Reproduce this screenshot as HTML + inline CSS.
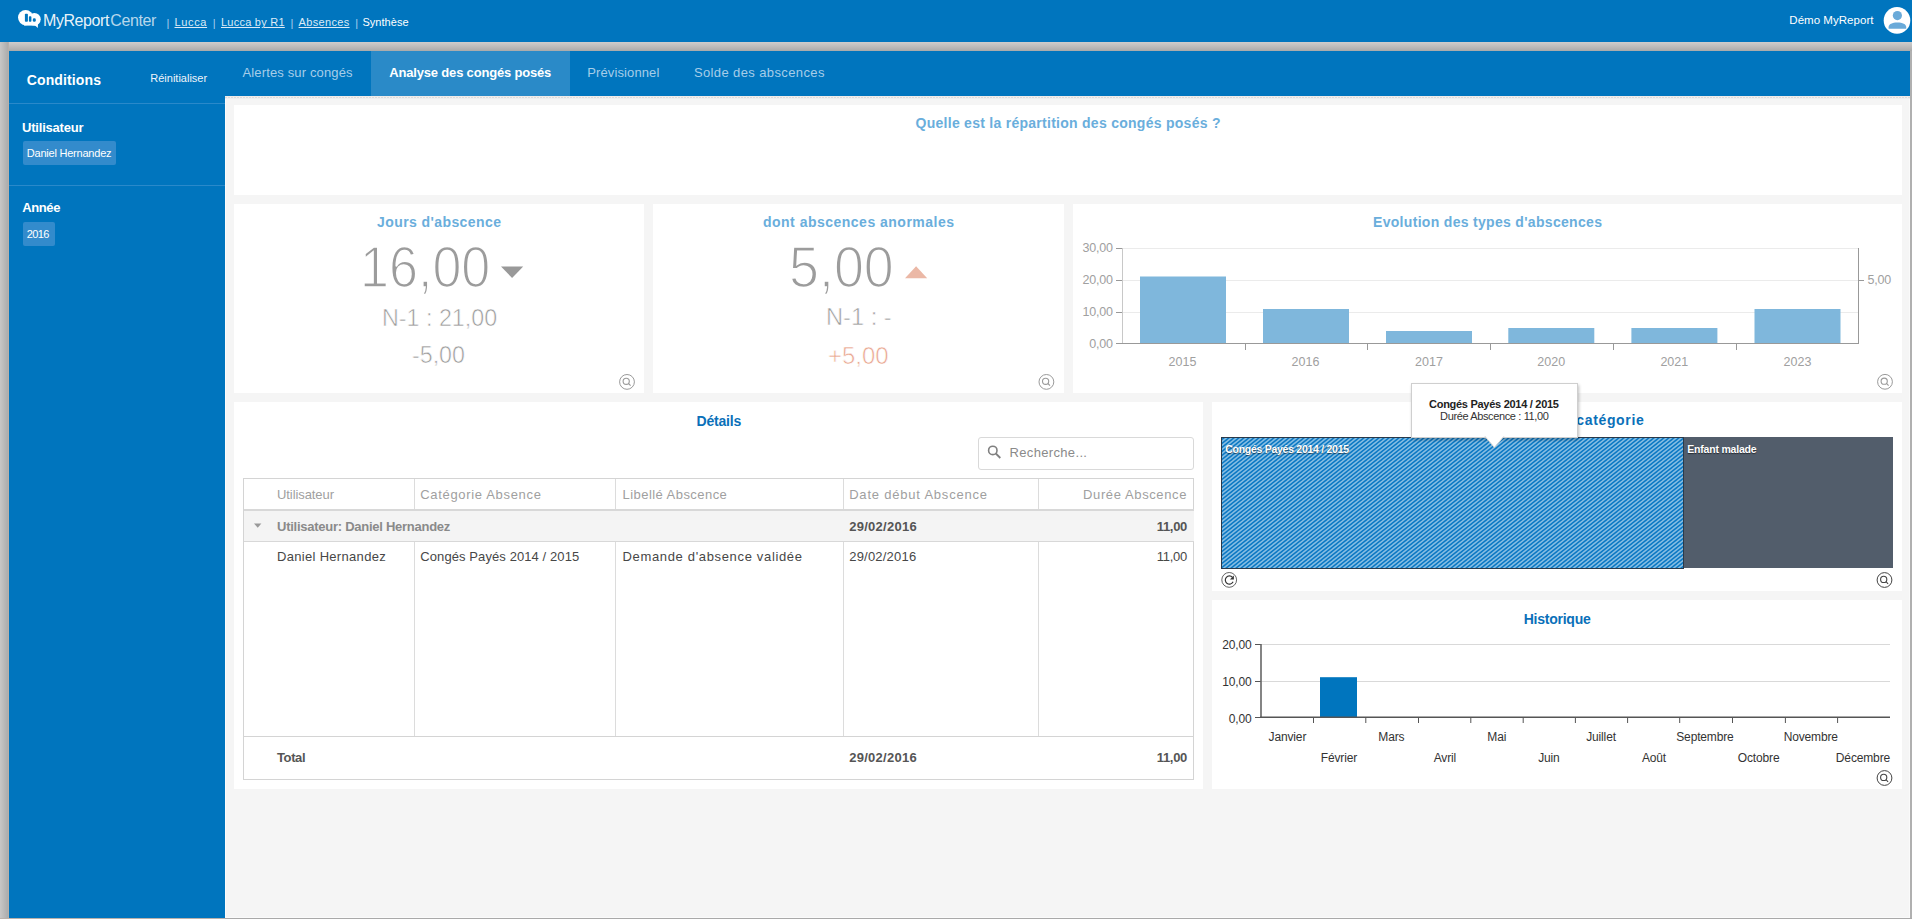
<!DOCTYPE html>
<html><head><meta charset="utf-8">
<style>
html,body{margin:0;padding:0;}
body{width:1912px;height:919px;position:relative;overflow:hidden;background:#b9b9b9;font-family:"Liberation Sans",sans-serif;}
.a{position:absolute;}
.t{position:absolute;line-height:1;white-space:nowrap;}
svg{position:absolute;overflow:visible;}
</style></head><body>

<div class="a" style="left:0px;top:0px;width:1912px;height:42px;background:#0075be;"></div>
<div class="a" style="left:0px;top:42px;width:1912px;height:9px;background:linear-gradient(#cfcdcc,#aaaaaa);"></div>
<div class="a" style="left:0px;top:42px;width:8px;height:877px;background:linear-gradient(90deg,#c8c7c6,#acacac);"></div>
<div class="a" style="left:8px;top:42px;width:1px;height:877px;background:#b7b0ab;"></div>
<div class="a" style="left:1910px;top:51px;width:2px;height:868px;background:#b0b0b0;"></div>
<div class="a" style="left:0px;top:918px;width:225px;height:1px;background:#bab1ab;"></div>
<div class="a" style="left:225px;top:918px;width:1687px;height:1px;background:#a9a9a9;"></div>
<div class="a" style="left:9px;top:51px;width:1901px;height:45px;background:#0075be;"></div>
<div class="a" style="left:9px;top:96px;width:216px;height:822px;background:#0075be;"></div>
<div class="a" style="left:225px;top:96px;width:1685px;height:822px;background:#f5f5f5;"></div>
<div class="a" style="left:225px;top:96px;width:1px;height:822px;background:#fcfcfc;"></div>
<div class="a" style="left:225px;top:917px;width:1685px;height:1px;background:#fafafa;"></div>
<div class="a" style="left:1909px;top:96px;width:1px;height:822px;background:#fafafa;"></div>
<div class="a" style="left:225px;top:96px;width:1685px;height:1px;background:#efebe9;"></div>
<div class="a" style="left:225px;top:97px;width:1685px;height:1px;background:repeating-linear-gradient(90deg,#dcdcdc 0px,#dcdcdc 2px,#f0f0f0 2px,#f0f0f0 3px);"></div>
<div class="a" style="left:225px;top:98px;width:1685px;height:1px;background:#eeeff0;"></div>
<div class="a" style="left:234px;top:105px;width:1668px;height:90px;background:#fff;"></div>
<div class="a" style="left:234px;top:204px;width:410px;height:189px;background:#fff;"></div>
<div class="a" style="left:653px;top:204px;width:411px;height:189px;background:#fff;"></div>
<div class="a" style="left:1073px;top:204px;width:829px;height:189px;background:#fff;"></div>
<div class="a" style="left:234px;top:402px;width:969px;height:387px;background:#fff;"></div>
<div class="a" style="left:1212px;top:402px;width:690px;height:189px;background:#fff;"></div>
<div class="a" style="left:1212px;top:600px;width:690px;height:189px;background:#fff;"></div>
<svg style="left:0;top:0" width="50" height="42" viewBox="0 0 50 42">
<circle cx="25.6" cy="17.6" r="7.6" fill="#fff"/>
<circle cx="34.4" cy="19.2" r="6.3" fill="#fff"/>
<rect x="24" y="19" width="12" height="6.6" fill="#fff"/>
<path d="M33.5 24 L37.8 27.9 L38 23 Z" fill="#fff"/>
<rect x="24.9" y="13.8" width="3" height="8" rx="0.8" fill="#0075be"/>
<rect x="28.9" y="16.2" width="2.5" height="5.6" rx="0.8" fill="#0075be"/>
<rect x="32.8" y="18.3" width="3" height="3.5" rx="1.4" fill="#0075be"/>
</svg>
<div class="t" style="top:12.50px;font-size:16px;color:rgba(255,255,255,0.93);letter-spacing:-0.42px;left:43px;">MyReport</div>
<div class="t" style="top:12.50px;font-size:16px;color:rgba(255,255,255,0.72);letter-spacing:-0.4px;left:110.3px;">Center</div>
<div class="t" style="top:17.65px;font-size:11px;color:#a9cfee;left:166.5px;">|</div>
<div class="t" style="top:17.65px;font-size:11px;color:#a9cfee;left:212.7px;">|</div>
<div class="t" style="top:17.65px;font-size:11px;color:#a9cfee;left:290.6px;">|</div>
<div class="t" style="top:17.65px;font-size:11px;color:#a9cfee;left:355.2px;">|</div>
<div class="t" style="top:17.45px;font-size:11px;color:#dcebf7;letter-spacing:0.65px;left:174.5px;text-decoration:underline;">Lucca</div>
<div class="t" style="top:17.45px;font-size:11px;color:#dcebf7;letter-spacing:0.24px;left:221px;text-decoration:underline;">Lucca by R1</div>
<div class="t" style="top:17.45px;font-size:11px;color:#dcebf7;letter-spacing:0.33px;left:298.6px;text-decoration:underline;">Absences</div>
<div class="t" style="top:17.45px;font-size:11px;color:#fff;letter-spacing:0.04px;left:362.4px;">Synthèse</div>
<div class="t" style="top:14.92px;font-size:11.5px;color:#fff;letter-spacing:0.04px;left:1789.3px;">Démo MyReport</div>
<svg style="left:0;top:0" width="1912" height="42" viewBox="0 0 1912 42">
<circle cx="1897" cy="20.4" r="13.3" fill="#fff"/>
<circle cx="1897.4" cy="15.6" r="4.6" fill="#6aaad9"/>
<path d="M1888.6 28.8 L1888.6 27.2 C1888.6 24.3 1892.2 22.6 1897.4 22.6 C1902.6 22.6 1906.2 24.3 1906.2 27.2 L1906.2 28.8 Z" fill="#6aaad9"/>
</svg>
<div class="a" style="left:371px;top:51px;width:199px;height:45px;background:#2a8ac8;"></div>
<div class="t" style="top:73.10px;font-size:14px;color:#fff;font-weight:bold;letter-spacing:0.12px;left:26.8px;">Conditions</div>
<div class="t" style="top:73.35px;font-size:11px;color:#eef4fa;left:150.3px;">Réinitialiser</div>
<div class="t" style="top:66.25px;font-size:13px;color:#a6cde9;letter-spacing:0.14px;left:242.5px;">Alertes sur congés</div>
<div class="t" style="top:66.25px;font-size:13px;color:#fff;font-weight:bold;letter-spacing:-0.18px;left:389.3px;">Analyse des congés posés</div>
<div class="t" style="top:66.45px;font-size:13px;color:#a6cde9;letter-spacing:0.12px;left:587.2px;">Prévisionnel</div>
<div class="t" style="top:66.45px;font-size:13px;color:#a6cde9;letter-spacing:0.39px;left:693.9px;">Solde des abscences</div>
<div class="a" style="left:9px;top:103px;width:216px;height:1px;background:#2a89ca;"></div>
<div class="a" style="left:9px;top:185px;width:216px;height:1px;background:#2a89ca;"></div>
<div class="t" style="top:121.15px;font-size:13px;color:#fff;font-weight:bold;letter-spacing:-0.2px;left:22px;">Utilisateur</div>
<div class="a" style="left:23px;top:141px;width:93px;height:24px;background:#338bcc;border-radius:2px;"></div>
<div class="t" style="top:147.55px;font-size:11px;color:#fff;letter-spacing:-0.22px;left:26.8px;">Daniel Hernandez</div>
<div class="t" style="top:201.35px;font-size:13px;color:#fff;font-weight:bold;letter-spacing:-0.4px;left:22.3px;">Année</div>
<div class="a" style="left:23px;top:222px;width:32px;height:24px;background:#338bcc;border-radius:2px;"></div>
<div class="t" style="top:228.55px;font-size:11px;color:#fff;letter-spacing:-0.6px;left:26.8px;">2016</div>
<div class="t" style="top:116.20px;font-size:14px;color:#6aaedc;font-weight:bold;letter-spacing:0.27px;left:668.00px;width:800px;text-align:center;text-indent:0.27px;">Quelle est la répartition des congés posés ?</div>
<div class="t" style="top:215.00px;font-size:14px;color:#6aaedc;font-weight:bold;letter-spacing:0.42px;left:39.00px;width:800px;text-align:center;text-indent:0.42px;">Jours d&#x27;abscence</div>
<div class="t" style="left:359.9px;top:237.9px;font-size:58px;color:#9c9c9c;-webkit-text-stroke:1.6px #fff;transform-origin:0 0;transform:scaleX(0.898)">16,00</div>
<svg style="left:0;top:0" width="1912" height="919" viewBox="0 0 1912 919"><path d="M501 266.5 L523.2 266.5 L512.1 278 Z" fill="#999"/><path d="M905 278.3 L927.2 278.3 L916.1 266.3 Z" fill="#ebb8a6"/><circle cx="627" cy="381.9" r="7.4" fill="none" stroke="#9a9a9a" stroke-width="1"/><circle cx="626.2" cy="381.29999999999995" r="3.1" fill="none" stroke="#9a9a9a" stroke-width="1.1"/><line x1="628.5" y1="383.5" x2="630.6" y2="385.7" stroke="#9a9a9a" stroke-width="1.1"/><circle cx="1046.4" cy="381.9" r="7.4" fill="none" stroke="#9a9a9a" stroke-width="1"/><circle cx="1045.6000000000001" cy="381.29999999999995" r="3.1" fill="none" stroke="#9a9a9a" stroke-width="1.1"/><line x1="1047.9" y1="383.5" x2="1050.0" y2="385.7" stroke="#9a9a9a" stroke-width="1.1"/><circle cx="1885" cy="381.8" r="7.4" fill="none" stroke="#9a9a9a" stroke-width="1"/><circle cx="1884.2" cy="381.2" r="3.1" fill="none" stroke="#9a9a9a" stroke-width="1.1"/><line x1="1886.5" y1="383.40000000000003" x2="1888.6" y2="385.6" stroke="#9a9a9a" stroke-width="1.1"/></svg>
<div class="t" style="left:381.9px;top:305.5px;font-size:24px;color:#9c9c9c;-webkit-text-stroke:0.6px #fff;transform-origin:0 0;transform:scaleX(0.97)">N-1 : 21,00</div>
<div class="t" style="left:412px;top:343.4px;font-size:24px;color:#9c9c9c;-webkit-text-stroke:0.6px #fff;transform-origin:0 0;transform:scaleX(0.968)">-5,00</div>
<div class="t" style="top:215.30px;font-size:14px;color:#6aaedc;font-weight:bold;letter-spacing:0.49px;left:458.50px;width:800px;text-align:center;text-indent:0.49px;">dont abscences anormales</div>
<div class="t" style="left:789.3px;top:238.2px;font-size:58px;color:#9c9c9c;-webkit-text-stroke:1.6px #fff;transform-origin:0 0;transform:scaleX(0.928)">5,00</div>
<div class="t" style="left:825.6px;top:305.3px;font-size:24px;color:#9c9c9c;-webkit-text-stroke:0.6px #fff;transform-origin:0 0;transform:scaleX(0.985)">N-1 : -</div>
<div class="t" style="left:828.2px;top:343.8px;font-size:24px;color:#e9a690;-webkit-text-stroke:0.6px #fff;transform-origin:0 0;transform:scaleX(0.997)">+5,00</div>
<div class="t" style="top:214.90px;font-size:14px;color:#6aaedc;font-weight:bold;letter-spacing:0.31px;left:1087.50px;width:800px;text-align:center;text-indent:0.31px;">Evolution des types d&#x27;abscences</div>
<svg style="left:0;top:0" width="1912" height="919" viewBox="0 0 1912 919"><line x1="1122" y1="248.5" x2="1858" y2="248.5" stroke="#ebebeb" stroke-width="1"/><line x1="1122" y1="280.5" x2="1858" y2="280.5" stroke="#ebebeb" stroke-width="1"/><line x1="1122" y1="312.5" x2="1858" y2="312.5" stroke="#ebebeb" stroke-width="1"/><line x1="1116" y1="248.5" x2="1122" y2="248.5" stroke="#999" stroke-width="1"/><line x1="1116" y1="280.5" x2="1122" y2="280.5" stroke="#999" stroke-width="1"/><line x1="1116" y1="312.5" x2="1122" y2="312.5" stroke="#999" stroke-width="1"/><line x1="1116" y1="343.5" x2="1122" y2="343.5" stroke="#999" stroke-width="1"/><line x1="1122.5" y1="248" x2="1122.5" y2="343" stroke="#c8c8c8" stroke-width="1"/><line x1="1858.5" y1="248" x2="1858.5" y2="344" stroke="#999" stroke-width="1"/><line x1="1858" y1="280.5" x2="1864" y2="280.5" stroke="#999" stroke-width="1"/><rect x="1140" y="276.5" width="86" height="66.5" fill="#7fb7dc"/><rect x="1263" y="309" width="86" height="34" fill="#7fb7dc"/><rect x="1386" y="331" width="86" height="12" fill="#7fb7dc"/><rect x="1508.3" y="328" width="86" height="15" fill="#7fb7dc"/><rect x="1631.4" y="328" width="86" height="15" fill="#7fb7dc"/><rect x="1754.5" y="309" width="86" height="34" fill="#7fb7dc"/><line x1="1122" y1="343.5" x2="1859" y2="343.5" stroke="#999" stroke-width="1"/><line x1="1245.5" y1="343" x2="1245.5" y2="350" stroke="#999" stroke-width="1"/><line x1="1367.5" y1="343" x2="1367.5" y2="350" stroke="#999" stroke-width="1"/><line x1="1490.5" y1="343" x2="1490.5" y2="350" stroke="#999" stroke-width="1"/><line x1="1613.5" y1="343" x2="1613.5" y2="350" stroke="#999" stroke-width="1"/><line x1="1736.5" y1="343" x2="1736.5" y2="350" stroke="#999" stroke-width="1"/></svg>
<div class="t" style="top:242.38px;font-size:12.5px;color:#a0a0a0;letter-spacing:-0.2px;left:1052.80px;width:60px;text-align:right;margin-right:--0.2px;">30,00</div>
<div class="t" style="top:274.07px;font-size:12.5px;color:#a0a0a0;letter-spacing:-0.2px;left:1052.80px;width:60px;text-align:right;margin-right:--0.2px;">20,00</div>
<div class="t" style="top:305.98px;font-size:12.5px;color:#a0a0a0;letter-spacing:-0.2px;left:1052.80px;width:60px;text-align:right;margin-right:--0.2px;">10,00</div>
<div class="t" style="top:337.57px;font-size:12.5px;color:#a0a0a0;letter-spacing:-0.2px;left:1052.80px;width:60px;text-align:right;margin-right:--0.2px;">0,00</div>
<div class="t" style="top:274.38px;font-size:12.5px;color:#a0a0a0;letter-spacing:-0.2px;left:1867.5px;">5,00</div>
<div class="t" style="top:356.38px;font-size:12.5px;color:#a0a0a0;left:1152.50px;width:60px;text-align:center;">2015</div>
<div class="t" style="top:356.38px;font-size:12.5px;color:#a0a0a0;left:1275.50px;width:60px;text-align:center;">2016</div>
<div class="t" style="top:356.38px;font-size:12.5px;color:#a0a0a0;left:1399.00px;width:60px;text-align:center;">2017</div>
<div class="t" style="top:356.38px;font-size:12.5px;color:#a0a0a0;left:1521.20px;width:60px;text-align:center;">2020</div>
<div class="t" style="top:356.38px;font-size:12.5px;color:#a0a0a0;left:1644.30px;width:60px;text-align:center;">2021</div>
<div class="t" style="top:356.38px;font-size:12.5px;color:#a0a0a0;left:1767.50px;width:60px;text-align:center;">2023</div>
<div class="t" style="top:413.60px;font-size:14px;color:#0a70b9;font-weight:bold;letter-spacing:-0.18px;left:318.90px;width:800px;text-align:center;text-indent:-0.18px;">Détails</div>
<div class="a" style="left:978px;top:437px;width:214px;height:31px;border:1px solid #d9d9d9;border-radius:3px;background:#fff"></div>
<svg style="left:0;top:0" width="1912" height="919" viewBox="0 0 1912 919"><circle cx="992.8" cy="450.4" r="4.2" fill="none" stroke="#808080" stroke-width="1.6"/><line x1="995.8" y1="453.5" x2="1000.3" y2="458" stroke="#808080" stroke-width="1.8"/></svg>
<div class="t" style="top:445.55px;font-size:13px;color:#8a8a8a;letter-spacing:0.34px;left:1009.5px;">Recherche...</div>
<div class="a" style="left:243px;top:478px;width:949px;height:300px;border:1px solid #d4d4d4;background:#fff"></div>
<div class="a" style="left:244px;top:509px;width:950px;height:2px;background:#d8d8d8;"></div>
<div class="a" style="left:244px;top:511px;width:950px;height:30px;background:#f4f4f4;"></div>
<div class="a" style="left:244px;top:541px;width:950px;height:1px;background:#d8d8d8;"></div>
<div class="a" style="left:244px;top:736px;width:950px;height:1px;background:#d4d4d4;"></div>
<div class="a" style="left:414px;top:479px;width:1px;height:30px;background:#dcdcdc;"></div>
<div class="a" style="left:414px;top:542px;width:1px;height:194px;background:#dcdcdc;"></div>
<div class="a" style="left:615px;top:479px;width:1px;height:30px;background:#dcdcdc;"></div>
<div class="a" style="left:615px;top:542px;width:1px;height:194px;background:#dcdcdc;"></div>
<div class="a" style="left:843px;top:479px;width:1px;height:30px;background:#dcdcdc;"></div>
<div class="a" style="left:843px;top:542px;width:1px;height:194px;background:#dcdcdc;"></div>
<div class="a" style="left:1038px;top:479px;width:1px;height:30px;background:#dcdcdc;"></div>
<div class="a" style="left:1038px;top:542px;width:1px;height:194px;background:#dcdcdc;"></div>
<svg style="left:0;top:0" width="1912" height="919" viewBox="0 0 1912 919"><path d="M254 523.6 L261.4 523.6 L257.7 527.8 Z" fill="#999"/></svg>
<div class="t" style="top:487.75px;font-size:13px;color:#a0a0a0;letter-spacing:-0.08px;left:277px;">Utilisateur</div>
<div class="t" style="top:487.75px;font-size:13px;color:#a0a0a0;letter-spacing:0.67px;left:420.3px;">Catégorie Absence</div>
<div class="t" style="top:487.75px;font-size:13px;color:#a0a0a0;letter-spacing:0.45px;left:622.5px;">Libellé Abscence</div>
<div class="t" style="top:487.75px;font-size:13px;color:#a0a0a0;letter-spacing:0.79px;left:849.2px;">Date début Abscence</div>
<div class="t" style="top:487.75px;font-size:13px;color:#a0a0a0;letter-spacing:0.61px;left:887.00px;width:300px;text-align:right;margin-right:-0.61px;">Durée Abscence</div>
<div class="t" style="top:519.55px;font-size:13px;color:#8a8a8a;font-weight:bold;letter-spacing:-0.26px;left:277px;">Utilisateur: Daniel Hernandez</div>
<div class="t" style="top:519.55px;font-size:13px;color:#555;font-weight:bold;letter-spacing:0.27px;left:849.2px;">29/02/2016</div>
<div class="t" style="top:519.55px;font-size:13px;color:#555;font-weight:bold;letter-spacing:-0.31px;left:1087.00px;width:100px;text-align:right;margin-right:--0.31px;">11,00</div>
<div class="t" style="top:549.65px;font-size:13px;color:#474747;letter-spacing:0.31px;left:277px;">Daniel Hernandez</div>
<div class="t" style="top:549.65px;font-size:13px;color:#474747;letter-spacing:0.09px;left:420.3px;">Congés Payés 2014 / 2015</div>
<div class="t" style="top:549.65px;font-size:13px;color:#474747;letter-spacing:0.66px;left:622.5px;">Demande d&#x27;absence validée</div>
<div class="t" style="top:549.65px;font-size:13px;color:#474747;letter-spacing:0.21px;left:849.2px;">29/02/2016</div>
<div class="t" style="top:549.65px;font-size:13px;color:#474747;letter-spacing:-0.24px;left:1087.00px;width:100px;text-align:right;margin-right:--0.24px;">11,00</div>
<div class="t" style="top:751.25px;font-size:13px;color:#555;font-weight:bold;letter-spacing:-0.39px;left:277px;">Total</div>
<div class="t" style="top:751.25px;font-size:13px;color:#555;font-weight:bold;letter-spacing:0.27px;left:849.2px;">29/02/2016</div>
<div class="t" style="top:751.25px;font-size:13px;color:#555;font-weight:bold;letter-spacing:-0.31px;left:1087.00px;width:100px;text-align:right;margin-right:--0.31px;">11,00</div>
<div class="t" style="top:412.90px;font-size:14px;color:#0a70b9;font-weight:bold;letter-spacing:0.66px;left:1153.00px;width:800px;text-align:center;text-indent:0.66px;">Répartition par catégorie</div>
<svg style="left:0;top:0" width="1912" height="919" viewBox="0 0 1912 919"><defs><pattern id="st" patternUnits="userSpaceOnUse" x="0" y="0" width="5" height="4"><rect width="5" height="4" fill="#86bde2"/><path d="M0 0 L2.6 0 L0 2.08 Z M5 0 L5 2.08 L2.4 4 L0 4 Z" fill="#0a78c4"/></pattern></defs><rect x="1221.5" y="437.5" width="462" height="131" fill="url(#st)" stroke="#2b3a4a" stroke-width="1"/></svg>
<div class="a" style="left:1683px;top:437px;width:209px;height:131px;background:#525d6b;border-left:1px solid #2b3a4a"></div>
<div class="t" style="top:443.68px;font-size:10.5px;color:#fff;font-weight:bold;letter-spacing:-0.28px;left:1225.3px;text-shadow:0 1px 1px rgba(0,0,0,0.55);">Congés Payés 2014 / 2015</div>
<div class="t" style="top:443.68px;font-size:10.5px;color:#fff;font-weight:bold;letter-spacing:-0.2px;left:1687.3px;text-shadow:0 1px 1px rgba(0,0,0,0.55);">Enfant malade</div>
<div class="a" style="left:1411px;top:383px;width:165px;height:53px;background:#fff;border:1px solid #cfcfcf;box-shadow:1px 2px 3px rgba(0,0,0,0.25)"></div>
<svg style="left:0;top:0" width="1912" height="919" viewBox="0 0 1912 919"><path d="M1485 436.5 L1494.4 447.5 L1503.8 436.5 Z" fill="#fff" stroke="#cfcfcf" stroke-width="1"/><rect x="1485.5" y="434" width="18" height="3" fill="#fff"/></svg>
<div class="t" style="top:399.45px;font-size:11px;color:#222;font-weight:bold;letter-spacing:-0.28px;left:1394.00px;width:200px;text-align:center;text-indent:-0.28px;">Congés Payés 2014 / 2015</div>
<div class="t" style="top:410.65px;font-size:11px;color:#333;letter-spacing:-0.37px;left:1394.50px;width:200px;text-align:center;text-indent:-0.37px;">Durée Abscence : 11,00</div>
<svg style="left:0;top:0" width="1912" height="919" viewBox="0 0 1912 919"><circle cx="1229.2" cy="579.9" r="7.4" fill="none" stroke="#555" stroke-width="0.9"/><path d="M1232.5 577.3 A4.1 4.1 0 1 0 1233.1 581.8" fill="none" stroke="#333" stroke-width="1.2"/><path d="M1233.9 575.6 L1233.9 579.6 L1229.9 579.6 Z" fill="#333"/><circle cx="1884.5" cy="580" r="7.4" fill="none" stroke="#444" stroke-width="1"/><circle cx="1883.7" cy="579.4" r="3.1" fill="none" stroke="#444" stroke-width="1.1"/><line x1="1886.0" y1="581.6" x2="1888.1" y2="583.8" stroke="#444" stroke-width="1.1"/><circle cx="1884.5" cy="778" r="7.4" fill="none" stroke="#444" stroke-width="1"/><circle cx="1883.7" cy="777.4" r="3.1" fill="none" stroke="#444" stroke-width="1.1"/><line x1="1886.0" y1="779.6" x2="1888.1" y2="781.8" stroke="#444" stroke-width="1.1"/></svg>
<div class="t" style="top:611.60px;font-size:14px;color:#0a70b9;font-weight:bold;letter-spacing:-0.24px;left:1157.20px;width:800px;text-align:center;text-indent:-0.24px;">Historique</div>
<svg style="left:0;top:0" width="1912" height="919" viewBox="0 0 1912 919"><line x1="1261" y1="644.5" x2="1890" y2="644.5" stroke="#d9d9d9" stroke-width="1"/><line x1="1261" y1="681.5" x2="1890" y2="681.5" stroke="#d9d9d9" stroke-width="1"/><line x1="1255" y1="644.5" x2="1261" y2="644.5" stroke="#555" stroke-width="1"/><line x1="1255" y1="681.5" x2="1261" y2="681.5" stroke="#555" stroke-width="1"/><line x1="1255" y1="717.5" x2="1261" y2="717.5" stroke="#555" stroke-width="1"/><rect x="1320" y="677.2" width="37" height="40" fill="#0075be"/><line x1="1261" y1="644" x2="1261" y2="718" stroke="#666" stroke-width="1.6"/><line x1="1260" y1="717.3" x2="1890" y2="717.3" stroke="#555" stroke-width="1.6"/><line x1="1313.5" y1="717" x2="1313.5" y2="723" stroke="#555" stroke-width="1"/><line x1="1365.8" y1="717" x2="1365.8" y2="723" stroke="#555" stroke-width="1"/><line x1="1418.5" y1="717" x2="1418.5" y2="723" stroke="#555" stroke-width="1"/><line x1="1470.8" y1="717" x2="1470.8" y2="723" stroke="#555" stroke-width="1"/><line x1="1523.2" y1="717" x2="1523.2" y2="723" stroke="#555" stroke-width="1"/><line x1="1575.4" y1="717" x2="1575.4" y2="723" stroke="#555" stroke-width="1"/><line x1="1627.6" y1="717" x2="1627.6" y2="723" stroke="#555" stroke-width="1"/><line x1="1679.7" y1="717" x2="1679.7" y2="723" stroke="#555" stroke-width="1"/><line x1="1732.5" y1="717" x2="1732.5" y2="723" stroke="#555" stroke-width="1"/><line x1="1785.4" y1="717" x2="1785.4" y2="723" stroke="#555" stroke-width="1"/><line x1="1837.6" y1="717" x2="1837.6" y2="723" stroke="#555" stroke-width="1"/></svg>
<div class="t" style="top:638.80px;font-size:12px;color:#333;letter-spacing:-0.15px;left:1191.50px;width:60px;text-align:right;margin-right:--0.15px;">20,00</div>
<div class="t" style="top:675.50px;font-size:12px;color:#333;letter-spacing:-0.15px;left:1191.50px;width:60px;text-align:right;margin-right:--0.15px;">10,00</div>
<div class="t" style="top:712.50px;font-size:12px;color:#333;letter-spacing:-0.15px;left:1191.50px;width:60px;text-align:right;margin-right:--0.15px;">0,00</div>
<div class="t" style="top:730.60px;font-size:12px;color:#333;letter-spacing:-0.15px;left:1227.50px;width:120px;text-align:center;text-indent:-0.15px;">Janvier</div>
<div class="t" style="top:730.60px;font-size:12px;color:#333;letter-spacing:-0.15px;left:1331.40px;width:120px;text-align:center;text-indent:-0.15px;">Mars</div>
<div class="t" style="top:730.60px;font-size:12px;color:#333;letter-spacing:-0.15px;left:1436.80px;width:120px;text-align:center;text-indent:-0.15px;">Mai</div>
<div class="t" style="top:730.60px;font-size:12px;color:#333;letter-spacing:-0.15px;left:1541.10px;width:120px;text-align:center;text-indent:-0.15px;">Juillet</div>
<div class="t" style="top:730.60px;font-size:12px;color:#333;letter-spacing:-0.15px;left:1645.00px;width:120px;text-align:center;text-indent:-0.15px;">Septembre</div>
<div class="t" style="top:730.60px;font-size:12px;color:#333;letter-spacing:-0.15px;left:1750.80px;width:120px;text-align:center;text-indent:-0.15px;">Novembre</div>
<div class="t" style="top:752.30px;font-size:12px;color:#333;letter-spacing:-0.15px;left:1279.00px;width:120px;text-align:center;text-indent:-0.15px;">Février</div>
<div class="t" style="top:752.30px;font-size:12px;color:#333;letter-spacing:-0.15px;left:1385.00px;width:120px;text-align:center;text-indent:-0.15px;">Avril</div>
<div class="t" style="top:752.30px;font-size:12px;color:#333;letter-spacing:-0.15px;left:1489.00px;width:120px;text-align:center;text-indent:-0.15px;">Juin</div>
<div class="t" style="top:752.30px;font-size:12px;color:#333;letter-spacing:-0.15px;left:1594.00px;width:120px;text-align:center;text-indent:-0.15px;">Août</div>
<div class="t" style="top:752.30px;font-size:12px;color:#333;letter-spacing:-0.15px;left:1698.70px;width:120px;text-align:center;text-indent:-0.15px;">Octobre</div>
<div class="t" style="top:752.30px;font-size:12px;color:#333;letter-spacing:-0.15px;left:1803.00px;width:120px;text-align:center;text-indent:-0.15px;">Décembre</div>
</body></html>
